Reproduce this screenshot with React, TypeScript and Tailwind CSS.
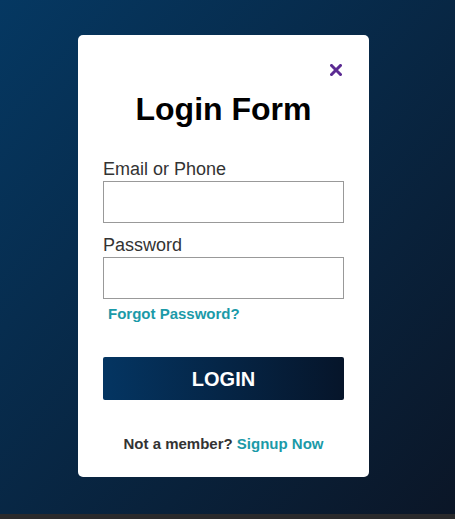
import React from "react";

export default function App() {
  return (
    <div className="flex flex-col font-['Liberation_Sans',Arial,sans-serif]">
      <div className="h-[514px] bg-[linear-gradient(to_bottom_right,#053862,#0b1627)] pl-[78px] pt-[35px]">
        <div className="flex h-[442px] w-[291px] flex-col rounded-[5px] bg-white px-[25px] pt-[29px]">
          <div className="flex h-[12px] justify-end pr-[2px]">
            <svg width="12" height="12" viewBox="0 0 12 12">
              <path d="M1.5 1.5 L10.5 10.5 M10.5 1.5 L1.5 10.5" stroke="#5b2a92" strokeWidth="3" strokeLinecap="square" />
            </svg>
          </div>
          <h1 className="mt-[13px] text-center text-[32px] leading-[40px] font-bold text-black">Login Form</h1>
          <label className="mt-[28px] block text-[18px] leading-[24px] text-[#333]">Email or Phone</label>
          <input type="text" className="block h-[42px] w-full border border-[#999] bg-white outline-none" />
          <label className="mt-[10px] block text-[18px] leading-[24px] text-[#333]">Password</label>
          <input type="password" className="block h-[42px] w-full border border-[#999] bg-white outline-none" />
          <a className="mt-[5px] ml-[5px] block text-[15px] leading-[20px] font-bold text-[#1b9aa8]">Forgot Password?</a>
          <button className="mt-[33px] flex h-[43px] w-full items-center justify-center rounded-[2px] bg-[linear-gradient(to_right,#043562,#06152a)] text-[20px] font-bold text-white">
            LOGIN
          </button>
          <p className="mt-[34px] text-center text-[15px] leading-[20px] font-bold text-[#333]">
            Not a member? <a className="text-[#1b9aa8]">Signup Now</a>
          </p>
        </div>
      </div>
      <div className="h-[5px] bg-[#2a2a2c]" />
    </div>
  );
}
